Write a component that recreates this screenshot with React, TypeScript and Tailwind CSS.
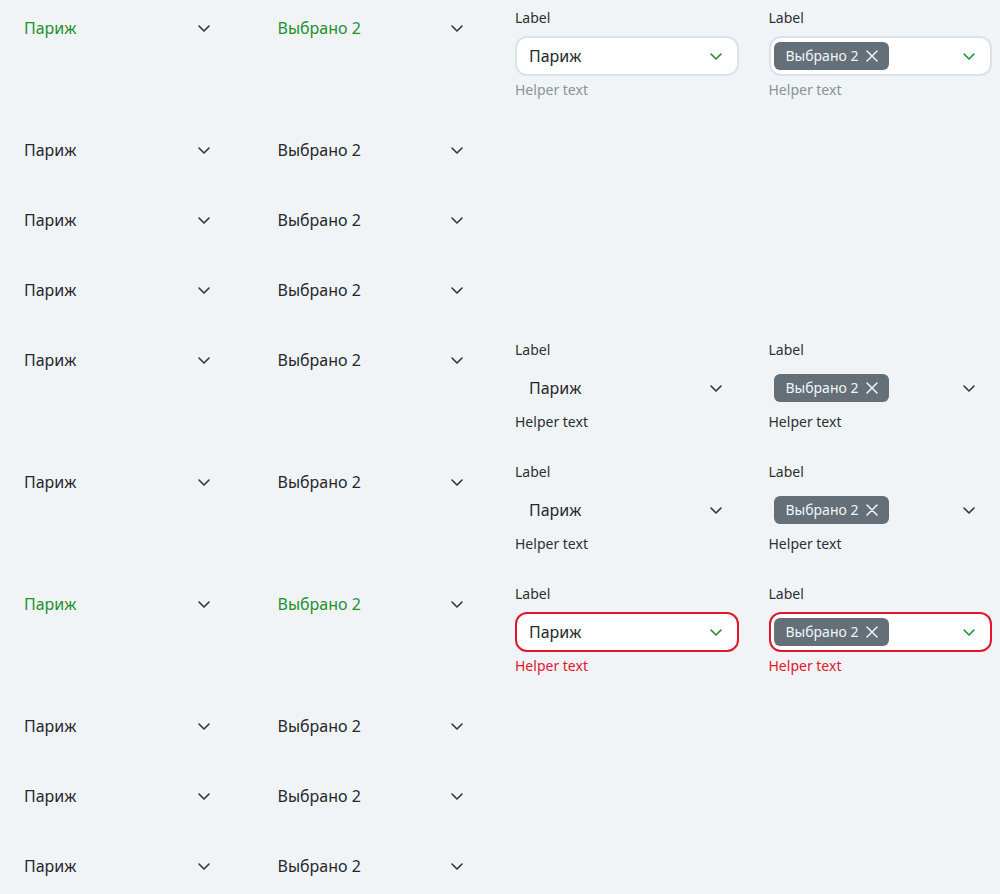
type Tone = "plain" | "green";
type Field = "none" | "outline" | "ghost" | "error";

const rows: { tone: Tone; field: Field }[] = [
  { tone: "green", field: "outline" },
  { tone: "plain", field: "none" },
  { tone: "plain", field: "none" },
  { tone: "plain", field: "none" },
  { tone: "plain", field: "ghost" },
  { tone: "plain", field: "ghost" },
  { tone: "green", field: "error" },
  { tone: "plain", field: "none" },
  { tone: "plain", field: "none" },
  { tone: "plain", field: "none" },
];

function Chevron({ className }: { className: string }) {
  return (
    <svg width="20" height="20" viewBox="0 0 20 20" fill="none" className={className}>
      <path d="M5 8l5 5 5-5" stroke="currentColor" strokeWidth="1.6" strokeLinecap="round" strokeLinejoin="round" />
    </svg>
  );
}

function Cross() {
  return (
    <svg width="12" height="12" viewBox="0 0 12 12" fill="none" className="shrink-0">
      <path d="M1 1l10 10M11 1L1 11" stroke="currentColor" strokeWidth="1.5" strokeLinecap="round" />
    </svg>
  );
}

function Chip() {
  return (
    <span className="flex h-7 items-center gap-2 rounded-md bg-[#646f77] pr-[11px] pl-3 text-sm text-[#f2f5f7]">
      Выбрано 2
      <Cross />
    </span>
  );
}

function PlainSelect({ tone, multi }: { tone: Tone; multi?: boolean }) {
  return (
    <div className="w-[240px] p-2">
      <div className="flex h-10 items-center justify-between pr-[18px] pl-4">
        <span className={tone === "green" ? "text-base text-[#21912f]" : "text-base text-[#24292e]"}>
          {multi ? "Выбрано 2" : "Париж"}
        </span>
        <Chevron className="text-[#30363b]" />
      </div>
    </div>
  );
}

function LabeledSelect({ field, multi }: { field: Field; multi?: boolean }) {
  if (field === "none") return <div className="w-[240px]" />;

  const box =
    field === "outline"
      ? "border-2 border-[#dbe3e9] bg-white"
      : field === "error"
        ? "border-2 border-[#e2172c] bg-white"
        : "border-2 border-transparent";
  const helper =
    field === "outline" ? "text-[#89939b]" : field === "error" ? "text-[#e2172c]" : "text-[#2b3034]";
  const chevron = field === "ghost" ? "text-[#30363b]" : "text-[#21912f]";

  return (
    <div className="flex w-[240px] flex-col p-2">
      <span className="h-5 text-sm leading-5 text-[#2b3034]">Label</span>
      <div className={`mt-2 flex h-10 items-center justify-between rounded-xl pr-[11px] ${box} ${multi ? "pl-[3px]" : "pl-[12px]"}`}>
        {multi ? <Chip /> : <span className="text-base text-[#24292e]">Париж</span>}
        <Chevron className={chevron} />
      </div>
      <span className={`mt-1 h-5 text-sm leading-5 ${helper}`}>Helper text</span>
    </div>
  );
}

export default function App() {
  return (
    <div className="min-h-screen overflow-hidden bg-[#f1f4f7] font-['Noto_Sans',sans-serif]">
      <div className="flex flex-col gap-[14px]">
        {rows.map((row, i) => (
          <div key={i} className="flex items-start gap-[14px]">
            <PlainSelect tone={row.tone} />
            <PlainSelect tone={row.tone} multi />
            <LabeledSelect field={row.field} />
            <LabeledSelect field={row.field} multi />
          </div>
        ))}
      </div>
    </div>
  );
}
